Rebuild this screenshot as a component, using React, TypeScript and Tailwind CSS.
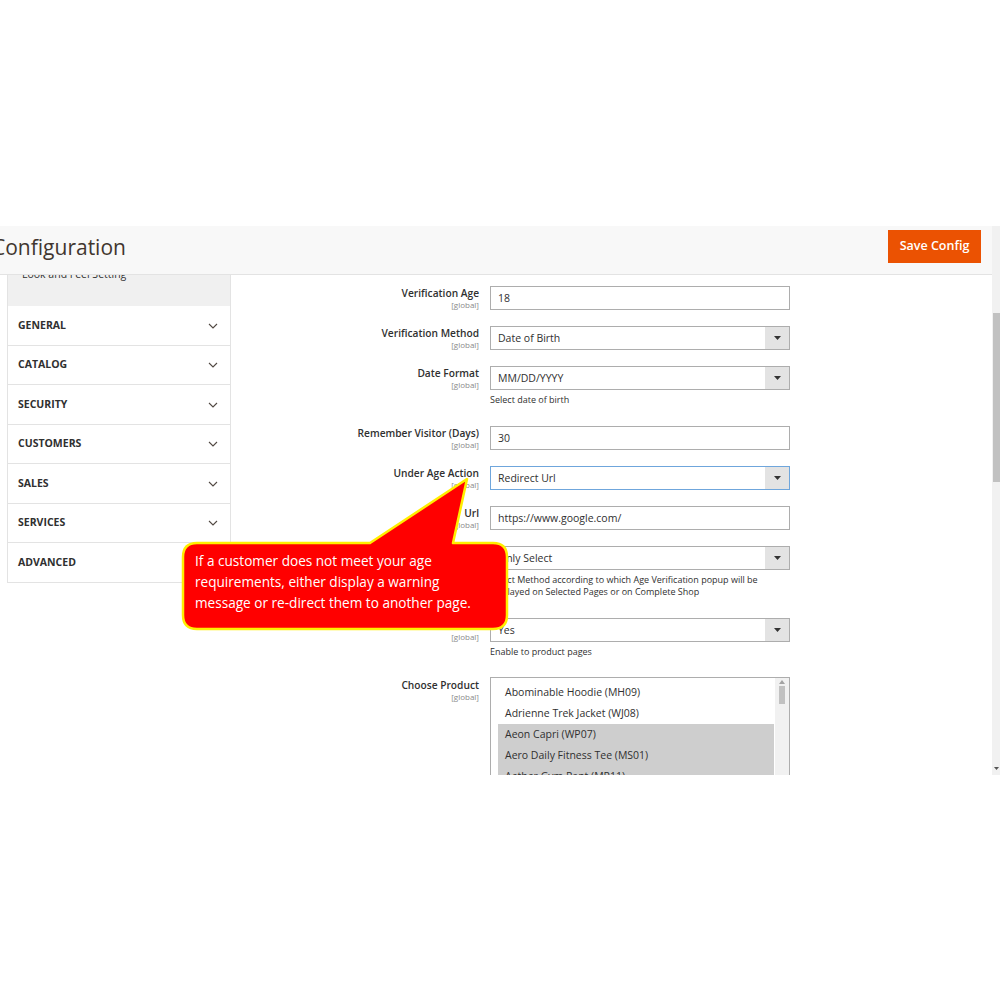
import React from "react";

const Chevron = () => (
  <svg width="10" height="6" viewBox="0 0 10 6">
    <path d="M1 1l4 4 4-4" fill="none" stroke="#514943" strokeWidth="1.1" />
  </svg>
);

const Caret = () => (
  <svg width="7" height="4" viewBox="0 0 7 4">
    <path d="M0 0h7L3.5 4z" fill="#333" />
  </svg>
);

function Input({ value }: { value: string }) {
  return (
    <div className="h-[24px] border border-[#adadad] bg-white px-[7px] flex items-center pt-[1px] text-[10.5px] text-[#303030]">
      {value}
    </div>
  );
}

function Select({ value, focus }: { value: string; focus?: boolean }) {
  return (
    <div
      className={`h-[24px] border ${focus ? "border-[#6fa6dc]" : "border-[#adadad]"} bg-white flex items-stretch text-[10.5px] text-[#303030]`}
    >
      <div className="flex-1 pl-[7px] pt-[1px] flex items-center">{value}</div>
      <div className="w-[24px] bg-[#e3e3e3] flex items-center justify-center">
        <Caret />
      </div>
    </div>
  );
}

function Row({
  label,
  children,
  note,
}: {
  label: string;
  children: React.ReactNode;
  note?: React.ReactNode;
}) {
  return (
    <div className="flex">
      <div className="w-[248px] text-right">
        <div className="text-[10.2px] font-semibold leading-[14px] text-[#303030]">{label}</div>
        <div className="text-[8px] leading-[9px] text-[#8a8a8a]">[global]</div>
      </div>
      <div className="ml-[11px] w-[300px]">
        {children}
        {note && (
          <div className="pt-[4px] pb-[4px] text-[9px] leading-[12px] text-[#303030]">{note}</div>
        )}
      </div>
    </div>
  );
}

const products = [
  { name: "Abominable Hoodie (MH09)", sel: false },
  { name: "Adrienne Trek Jacket (WJ08)", sel: false },
  { name: "Aeon Capri (WP07)", sel: true },
  { name: "Aero Daily Fitness Tee (MS01)", sel: true },
  { name: "Aether Gym Pant (MP11)", sel: true },
  { name: "Affirm Water Bottle (24-UG06)", sel: false },
  { name: "Agasti Messenger Bag (24-MB05)", sel: false },
];

const navItems = ["GENERAL", "CATALOG", "SECURITY", "CUSTOMERS", "SALES", "SERVICES", "ADVANCED"];

export default function App() {
  return (
    <div className="w-[1000px] h-[1000px] bg-white font-['Open_Sans',sans-serif] overflow-hidden">
      <div className="h-[226px]" />
      <div className="relative h-[549px] flex overflow-hidden">
        <div className="flex-1 flex flex-col">
          {/* Header */}
          <div className="relative z-10 h-[49px] shrink-0 bg-[#f8f8f8] border-b border-[#e3e3e3] flex items-center justify-between pr-[11px]">
            <div className="-ml-[8px] text-[21px] font-normal text-[#41362f] leading-none -mt-[6px]">
              Configuration
            </div>
            <div className="h-[33px] w-[93px] bg-[#eb5202] text-white text-[12.5px] font-semibold flex items-center justify-center -mt-[7px]">
              Save Config
            </div>
          </div>
          {/* Body */}
          <div className="flex flex-1 overflow-hidden">
            {/* Sidebar */}
            <div className="ml-[7px] w-[224px] shrink-0">
              <div className="h-[31px] bg-[#f0f0f0] border-x border-[#e3e3e3] overflow-hidden">
                <div className="pl-[14px] -mt-[8px] text-[10.5px] leading-[14px] text-[#303030]">
                  Look and Feel Setting
                </div>
              </div>
              {navItems.map((n) => (
                <div
                  key={n}
                  className="h-[39.5px] border-x border-b border-[#e3e3e3] bg-white flex items-center justify-between pl-[10px] pr-[12px] pt-[1px]"
                >
                  <span className="text-[10.5px] font-bold text-[#303030]">{n}</span>
                  {n !== "ADVANCED" && <Chevron />}
                </div>
              ))}
            </div>
            {/* Form */}
            <div className="pt-[11px] flex flex-col gap-[16px]">
              <Row label="Verification Age">
                <Input value="18" />
              </Row>
              <Row label="Verification Method">
                <Select value="Date of Birth" />
              </Row>
              <Row label="Date Format" note="Select date of birth">
                <Select value="MM/DD/YYYY" />
              </Row>
              <Row label="Remember Visitor (Days)">
                <Input value="30" />
              </Row>
              <Row label="Under Age Action">
                <Select value="Redirect Url" focus />
              </Row>
              <Row label="Url">
                <Input value="https://www.google.com/" />
              </Row>
              <Row
                label="Display Popup On"
                note={
                  <>
                    Select Method according to which Age Verification popup will be
                    <br />
                    displayed on Selected Pages or on Complete Shop
                  </>
                }
              >
                <Select value="Only Select" />
              </Row>
              <Row label="Enable on Product" note="Enable to product pages">
                <Select value="Yes" />
              </Row>
              <Row label="Choose Product">
                <div className="-mt-[1px] h-[200px] border border-[#adadad] bg-white flex">
                  <div className="flex-1 pl-[7px] pt-[4px] pr-[1px]">
                    {products.map((p) => (
                      <div
                        key={p.name}
                        className={`h-[21px] pl-[7px] flex items-center text-[10.5px] text-[#303030] ${p.sel ? "bg-[#cecece]" : ""}`}
                      >
                        {p.name}
                      </div>
                    ))}
                  </div>
                  <div className="w-[14px] bg-[#f1f1f1] flex flex-col items-center pt-[2px]">
                    <svg width="6" height="4" viewBox="0 0 6 4">
                      <path d="M0 4h6L3 0z" fill="#a3a3a3" />
                    </svg>
                    <div className="mt-[2px] w-[6px] h-[18px] bg-[#c1c1c1]" />
                  </div>
                </div>
              </Row>
            </div>
          </div>
        </div>
        {/* Page scrollbar */}
        <div className="w-[8px] shrink-0 bg-[#f1f1f1] flex flex-col items-center">
          <div className="mt-[87px] w-[7px] ml-[1px] h-[169px] bg-[#c1c1c1]" />
          <div className="mt-auto mb-[5px]">
            <svg width="5" height="3" viewBox="0 0 5 3">
              <path d="M0 0h5L2.5 3z" fill="#555" />
            </svg>
          </div>
        </div>

        {/* Callout */}
        <div className="absolute left-[180px] top-[249px] w-[330px] h-[158px] z-20">
          <svg className="absolute inset-0" width="330" height="158" viewBox="0 0 330 158">
            <path
              d="M17 68 L190 68 L287 4 L273 68 L313 68 Q327 68 327 82 L327 140 Q327 154 313 154 L17 154 Q3 154 3 140 L3 82 Q3 68 17 68 Z"
              fill="#ff0000"
              stroke="#ffee00"
              strokeWidth="2.5"
              strokeLinejoin="round"
            />
          </svg>
          <div className="absolute left-[15px] top-[75px] text-[13.6px] leading-[21px] text-white">
            If a customer does not meet your age
            <br />
            requirements, either display a warning
            <br />
            message or re-direct them to another page.
          </div>
        </div>
      </div>
    </div>
  );
}
